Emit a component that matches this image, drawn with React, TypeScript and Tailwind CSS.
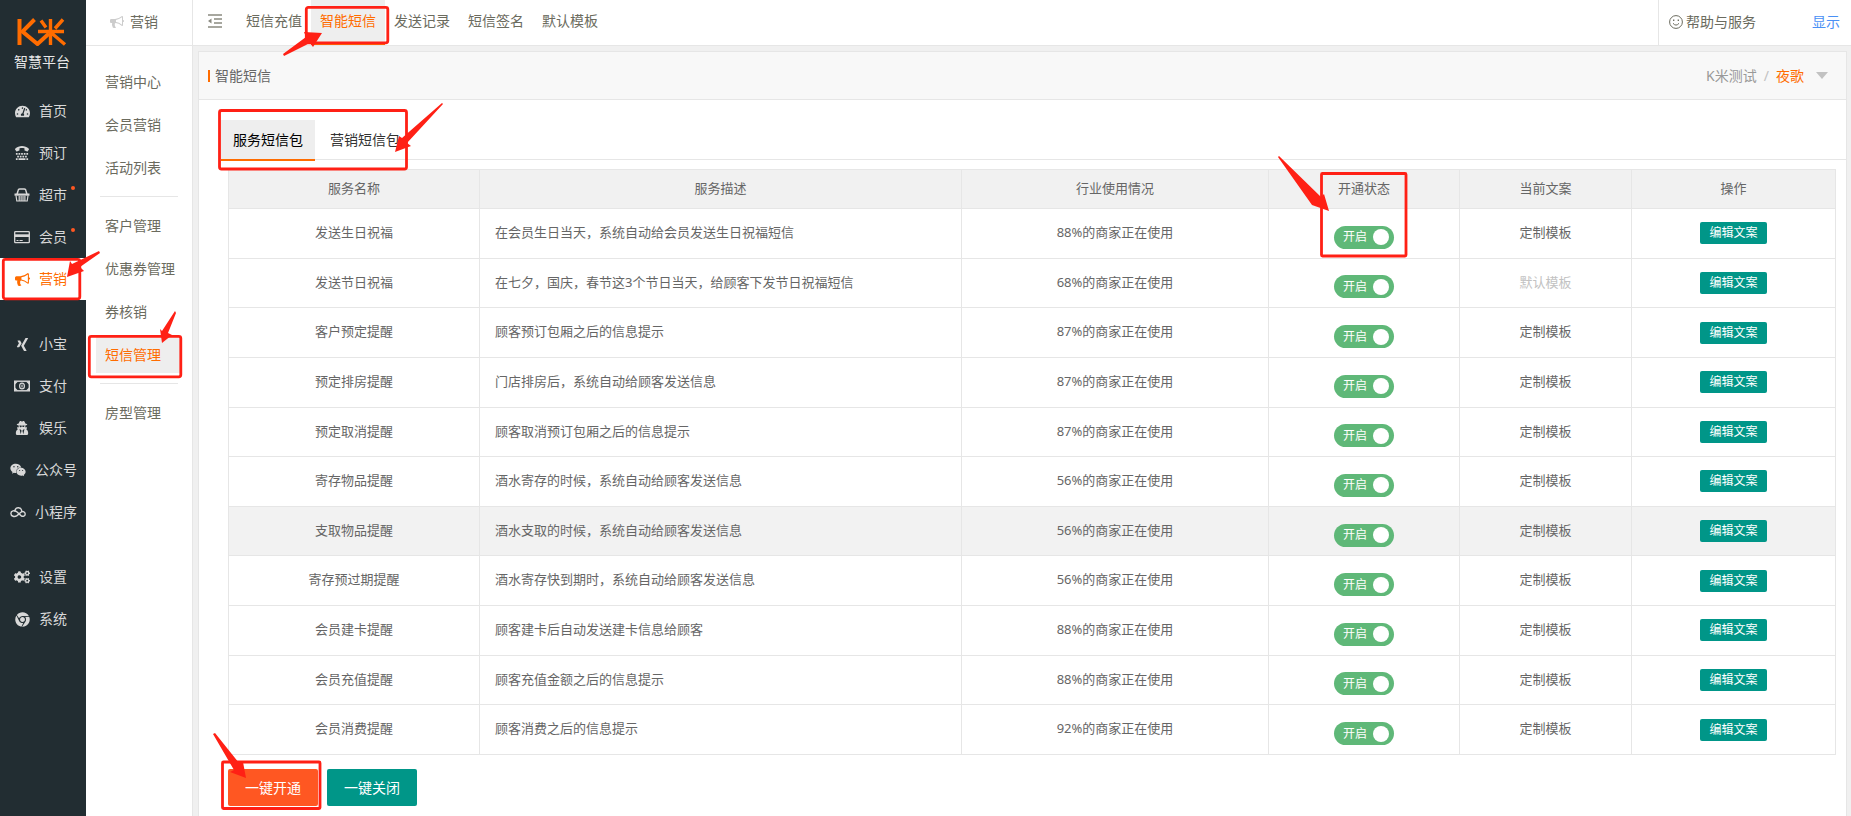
import { useState } from "react";
import type { ReactNode } from "react";
import clsx from "clsx";
import {
  FaChrome,
  FaCogs,
  FaTachometerAlt,
  FaTty,
  FaUserSecret,
  FaWeixin,
  FaXing,
} from "react-icons/fa";

type MenuItem = {
  label: string;
  icon: ReactNode;
  dot?: boolean;
  active?: boolean;
};

type Service = {
  name: string;
  desc: string;
  usage: number;
  custom: boolean;
};

function Bullhorn({ className }: { className?: string }) {
  return (
    <svg viewBox="0 0 1792 1792" fill="currentColor" className={className} aria-hidden="true">
      <path d="M1664 640q53 0 90.5 37.5t37.5 90.5-37.5 90.5-90.5 37.5v384q0 52-38 90t-90 38q-417-347-812-380-58 19-91 66t-31 100.5 40 92.5q-20 33-23 65.5t6 58 33.5 55 48 50 61.5 50.5q-29 58-111.5 83t-168.5 11.5-132-55.5q-7-23-29.5-87.5t-32-94.5-23-89-15-101 3.5-98.5 22-110.5h-122q-66 0-113-47t-47-113v-192q0-66 47-113t113-47h480q435 0 896-384 52 0 90 38t38 90v384zm-128 604v-954q-394 302-768 343v270q377 42 768 341z" />
    </svg>
  );
}

function Basket() {
  return (
    <svg viewBox="0 0 16 16" className="size-4" fill="none" stroke="currentColor" aria-hidden="true">
      <path d="M3 7.5 4.2 3.2Q4.4 2 5.6 2h4.8q1.2 0 1.4 1.2L13 7.5" strokeWidth="1.5" />
      <path d="M.5 6.500h15v2.200h-15z" fill="currentColor" stroke="none" />
      <path d="M2 8.500 2.800 14h10.400L14 8.500M5.200 9v4.500M7.100 9v4.500M9 9v4.500M10.900 9v4.500" strokeWidth="1.200" />
    </svg>
  );
}

function Card() {
  return (
    <svg viewBox="0 0 16 16" className="size-4" fill="none" stroke="currentColor" aria-hidden="true">
      <rect x="0.7" y="2.7" width="14.6" height="11" rx="0.8" strokeWidth="1.3" />
      <path d="M.7 5.300h14.600v2.700H.7z" fill="currentColor" stroke="none" />
      <path d="M2.500 11.500h2M5.500 11.500h3.200" strokeWidth="1.2" />
    </svg>
  );
}

function Money() {
  return (
    <svg viewBox="0 0 16 16" className="size-4" fill="none" stroke="currentColor" aria-hidden="true">
      <rect x="0.7" y="3.2" width="14.6" height="9.6" strokeWidth="1.4" />
      <ellipse cx="8" cy="8" rx="2.4" ry="2.9" strokeWidth="1.2" />
      <path d="M8 6.400v3.200" strokeWidth="1.1" />
      <path d="M1 3.500h3L1 6.500zM15 3.500h-3l3 3zM1 12.500h3L1 9.500zM15 12.500h-3l3-3z" fill="currentColor" stroke="none" />
    </svg>
  );
}

function CloudLoop() {
  return (
    <svg viewBox="0 0 16 16" className="size-4" fill="none" stroke="currentColor" strokeWidth="1.4" strokeLinecap="round" aria-hidden="true">
      <path d="M7 11.600C4.500 13.200.9 12.500.9 9.500S4.500 6.300 6.500 7.600L11 11.600c2 1.500 4.200.3 4.200-1.700S13 6.900 11.500 7.800L7 11.600" />
      <path d="M4.800 6.800C5.800 2.700 11.500 2.700 11.800 7.500" />
    </svg>
  );
}

function Logo() {
  return (
    <svg viewBox="0 0 50 28" className="h-7 w-[50px]" fill="none" stroke="#ff6c00" strokeWidth="4" aria-hidden="true">
      <path d="M2.500 1v26" />
      <path d="M17.500 1.500 5.500 13.500 20.500 26 32 15.500" />
      <path d="M21 13.500h26M33.500 1v26M24 2.500l5 7M46 1.500l-8 9M35 15.500l13 11" strokeWidth="3.4" />
    </svg>
  );
}

const MENU_GROUPS: MenuItem[][] = [
  [
    { label: "首页", icon: <FaTachometerAlt className="size-[15px]" /> },
    { label: "预订", icon: <FaTty className="size-[14px]" /> },
    { label: "超市", icon: <Basket />, dot: true },
    { label: "会员", icon: <Card />, dot: true },
    { label: "营销", icon: <Bullhorn className="size-[15px]" />, active: true },
  ],
  [
    { label: "小宝", icon: <FaXing className="size-[15px]" /> },
    { label: "支付", icon: <Money /> },
    { label: "娱乐", icon: <FaUserSecret className="size-[14px]" /> },
    { label: "公众号", icon: <FaWeixin className="size-4" /> },
    { label: "小程序", icon: <CloudLoop /> },
  ],
  [
    { label: "设置", icon: <FaCogs className="size-4" /> },
    { label: "系统", icon: <FaChrome className="size-[15px]" /> },
  ],
];

const SUB_GROUPS = [
  ["营销中心", "会员营销", "活动列表"],
  ["客户管理", "优惠券管理", "券核销", "短信管理"],
  ["房型管理"],
];

const TOP_LINKS = ["短信充值", "智能短信", "发送记录", "短信签名", "默认模板"];

const SERVICES: Service[] = [
  { name: "发送生日祝福", desc: "在会员生日当天，系统自动给会员发送生日祝福短信", usage: 88, custom: true },
  { name: "发送节日祝福", desc: "在七夕，国庆，春节这3个节日当天，给顾客下发节日祝福短信", usage: 68, custom: false },
  { name: "客户预定提醒", desc: "顾客预订包厢之后的信息提示", usage: 87, custom: true },
  { name: "预定排房提醒", desc: "门店排房后，系统自动给顾客发送信息", usage: 87, custom: true },
  { name: "预定取消提醒", desc: "顾客取消预订包厢之后的信息提示", usage: 87, custom: true },
  { name: "寄存物品提醒", desc: "酒水寄存的时候，系统自动给顾客发送信息", usage: 56, custom: true },
  { name: "支取物品提醒", desc: "酒水支取的时候，系统自动给顾客发送信息", usage: 56, custom: true },
  { name: "寄存预过期提醒", desc: "酒水寄存快到期时，系统自动给顾客发送信息", usage: 56, custom: true },
  { name: "会员建卡提醒", desc: "顾客建卡后自动发送建卡信息给顾客", usage: 88, custom: true },
  { name: "会员充值提醒", desc: "顾客充值金额之后的信息提示", usage: 88, custom: true },
  { name: "会员消费提醒", desc: "顾客消费之后的信息提示", usage: 92, custom: true },
];

function Sidebar() {
  return (
    <aside className="w-[86px] shrink-0 bg-[#222d32] text-[#d8d8d8]">
      <div className="flex h-[90px] flex-col items-center pt-[18px] pr-0.5">
        <Logo />
        <span className="mt-1.5 leading-5 text-[#e8e8e8]">智慧平台</span>
      </div>
      <nav className="flex flex-col gap-[23px]">
        {MENU_GROUPS.map((group, i) => (
          <ul key={i}>
            {group.map((item) => (
              <li key={item.label}>
                <a
                  href="#"
                  className={clsx(
                    "relative flex h-[42px] items-center gap-[9px]",
                    item.label.length > 2 ? "pl-[10px]" : "pl-[14px]",
                    item.active && "bg-white text-[#ff6c00]"
                  )}
                >
                  <span className="flex w-4 justify-center">{item.icon}</span>
                  {item.label}
                  {item.dot && (
                    <span className="absolute top-3 left-[71px] size-1 rounded-full bg-[#ff5722]" />
                  )}
                </a>
              </li>
            ))}
          </ul>
        ))}
      </nav>
    </aside>
  );
}

function SubNav() {
  return (
    <aside className="w-[107px] shrink-0 border-r border-[#e6e6e6] bg-white text-[#6b6b5e]">
      <div className="flex h-[46px] items-center gap-1.5 border-b border-[#e6e6e6] pb-0.5 pl-6">
        <Bullhorn className="size-[14px] text-[#cccccc]" />
        营销
      </div>
      <nav className="pt-[14px]">
        {SUB_GROUPS.map((group, i) => (
          <div key={i}>
            {i > 0 && <hr className="mx-[14px] my-[7px] border-[#e6e6e6]" />}
            {group.map((label) => (
              <div key={label} className="flex h-[43px] items-center px-[10px]">
                <a
                  href="#"
                  className={clsx(
                    "flex h-9 flex-1 items-center pl-[9px] whitespace-nowrap",
                    label === "短信管理" && "bg-[#eeeeee] text-[#ff6c00]"
                  )}
                >
                  {label}
                </a>
              </div>
            ))}
          </div>
        ))}
      </nav>
    </aside>
  );
}

function TopBar() {
  return (
    <header className="flex h-[46px] shrink-0 items-stretch border-b border-[#e6e6e6] bg-white text-[#6b6b5e]">
      <button type="button" aria-label="收起菜单" className="mr-[14px] ml-[14px] pb-1">
        <svg viewBox="0 0 16 14" className="h-[14px] w-4" fill="none" stroke="#8a8a80" strokeWidth="1.5" aria-hidden="true">
          <path d="M1 1h14M7 5h8M7 9h8M1 13h14" />
          <path d="M1 7l3.500-2.500v5z" fill="#8a8a80" stroke="none" />
        </svg>
      </button>
      <nav className="flex">
        {TOP_LINKS.map((label) => (
          <a
            key={label}
            href="#"
            className={clsx(
              "flex w-[74px] items-center justify-center border-b-2 pb-0.5",
              label === "智能短信"
                ? "border-[#ff6c00] bg-[#eeeeee] text-[#ff6c00]"
                : "border-transparent"
            )}
          >
            {label}
          </a>
        ))}
      </nav>
      <div className="ml-auto flex items-center border-l border-[#e6e6e6] pr-[11px] pb-0.5 pl-[10px]">
        <svg viewBox="0 0 14 14" className="mr-[3px] size-[14px]" fill="none" stroke="#6b6b5e" aria-hidden="true">
          <circle cx="7" cy="7" r="6.4" />
          <path d="M4 8.300q3 3.600 6 0" />
          <path d="M4.700 4.500v1.500M9.300 4.500v1.500" strokeWidth="1.3" />
        </svg>
        <a href="#">帮助与服务</a>
        <a href="#" className="ml-14 text-[#4a90f5]">
          显示
        </a>
      </div>
    </header>
  );
}

function Switch({ name }: { name: string }) {
  const [on, setOn] = useState(true);

  return (
    <label
      className={clsx(
        "relative mt-2 inline-flex h-[23px] w-[60px] cursor-pointer items-center justify-between rounded-full pr-[5px] pl-[9px] text-xs text-white",
        on ? "bg-[#5fb878]" : "flex-row-reverse bg-[#c2c2c2]"
      )}
    >
      <input
        type="checkbox"
        aria-label={name}
        className="sr-only"
        checked={on}
        onChange={() => setOn(!on)}
      />
      <span>{on ? "开启" : "关闭"}</span>
      <span className="size-4 rounded-full bg-white" />
    </label>
  );
}

function ServiceTable() {
  const cell = "border border-[#e6e6e6]";
  const head = "border border-[#e6e6e6] pb-0.5 font-normal";
  const text = "border border-[#e6e6e6] pb-0.5";

  return (
    <table className="h-[586px] w-full table-fixed border-collapse text-center text-[13px] text-[#666666]">
      <thead>
        <tr className="h-[39px] bg-[#f1f1f1]">
          <th className={clsx(head, "w-[251px]")}>服务名称</th>
          <th className={clsx(head, "w-[482px]")}>服务描述</th>
          <th className={clsx(head, "w-[307px]")}>行业使用情况</th>
          <th className={clsx(head, "w-[191px]")}>开通状态</th>
          <th className={clsx(head, "w-[172px]")}>当前文案</th>
          <th className={clsx(head, "w-[204px]")}>操作</th>
        </tr>
      </thead>
      <tbody>
        {SERVICES.map((s, i) => (
          <tr key={s.name} className={clsx(i === 6 && "bg-[#f2f2f2]")}>
            <td className={text}>{s.name}</td>
            <td className={clsx(text, "pl-[15px] text-left")}>{s.desc}</td>
            <td className={text}>{s.usage}%的商家正在使用</td>
            <td className={cell}>
              <div className="flex justify-center">
                <Switch name={s.name} />
              </div>
            </td>
            <td className={clsx(text, !s.custom && "text-[#c2c2c2]")}>
              {s.custom ? "定制模板" : "默认模板"}
            </td>
            <td className={cell}>
              <button
                type="button"
                className="h-[22px] rounded-xs bg-[#009688] px-[9px] text-xs text-white"
              >
                编辑文案
              </button>
            </td>
          </tr>
        ))}
      </tbody>
    </table>
  );
}

function Marks() {
  return (
    <svg
      width="1851"
      height="816"
      viewBox="0 0 1851 816"
      className="pointer-events-none absolute top-0 left-0 max-w-none"
      aria-hidden="true"
    >
      <g fill="none" stroke="#ff2015" strokeWidth="2.8">
        <rect x="3.3" y="259.3" width="76.5" height="39.5" rx="2" />
        <rect x="89.3" y="336.3" width="91.5" height="40.5" rx="2" />
        <rect x="306.3" y="7.3" width="81.5" height="35.5" rx="2" />
        <rect x="219.5" y="110.5" width="187" height="58.5" rx="2" />
        <rect x="1321.5" y="173.5" width="84.5" height="82.5" rx="1" />
        <rect x="222.5" y="762" width="97.5" height="46.5" rx="1" />
      </g>
      <g fill="#ff2015">
        <path d="M99 251 72 264 70 261 67 277 84 271 80 267 100 253z" />
        <path d="M175 311 162 331 160 329 162 343 172 335 168 333 176 313z" />
        <path d="M283 54 306 37 304 32 322 33 313 47 310 43 284 56z" />
        <path d="M442 103 402 138 399 136 395 152 411 146 407 143 443 104z" />
        <path d="M1278 157 1312 205 1329 211 1324 194 1321 197 1279 156z" />
        <path d="M213 734 234 770 230 772 246 778 243 762 239 763 215 733z" />
      </g>
    </svg>
  );
}

export default function App() {
  const [tab, setTab] = useState("服务短信包");

  return (
    <div className="relative flex min-h-screen overflow-hidden bg-[#f0f0f0] font-['Noto_Sans','Noto_Sans_CJK_SC',sans-serif] text-sm">
      <Sidebar />
      <SubNav />

      <div className="flex min-w-0 flex-1 flex-col">
        <TopBar />

        <main className="mt-[5px] mr-1 ml-[5px] flex-1 border border-b-0 border-[#e6e6e6] bg-white">
          <div className="flex h-12 items-center border-b border-[#e6e6e6] bg-[#f8f8f8] pr-[18px] pl-[9px]">
            <span className="mr-[5px] h-3 w-0.5 bg-[#ff6c00]" />
            <h1 className="text-[#666666]">智能短信</h1>
            <button type="button" className="ml-auto flex items-center text-[#999999]">
              K米测试
              <span className="mx-[7px] text-[#c2c2c2]">/</span>
              <span className="text-[#ff6c00]">夜歌</span>
              <svg viewBox="0 0 12 7" className="ml-3 h-[7px] w-3" fill="#c2c2c2" aria-hidden="true">
                <path d="M0 0h12L6 7z" />
              </svg>
            </button>
          </div>

          <div className="mt-5 ml-[22px] flex h-10 items-start border-b border-[#e6e6e6]">
            {["服务短信包", "营销短信包"].map((label) => (
              <button
                key={label}
                type="button"
                onClick={() => setTab(label)}
                className={clsx(
                  "h-[41px] border-b-2",
                  label === tab
                    ? "border-[#ff6c00] bg-[#eeeeee] px-3 text-black"
                    : "border-transparent px-[15px] text-[#333333]"
                )}
              >
                {label}
              </button>
            ))}
          </div>

          <div className="mt-[9px] mr-[10px] ml-[29px]">
            <ServiceTable />
            <div className="mt-[14px] flex gap-[9px] text-white">
              <button type="button" className="h-[37px] rounded-xs bg-[#ff5722] px-[17px]">
                一键开通
              </button>
              <button type="button" className="h-[37px] rounded-xs bg-[#009688] px-[17px]">
                一键关闭
              </button>
            </div>
          </div>
        </main>
      </div>

      <Marks />
    </div>
  );
}
